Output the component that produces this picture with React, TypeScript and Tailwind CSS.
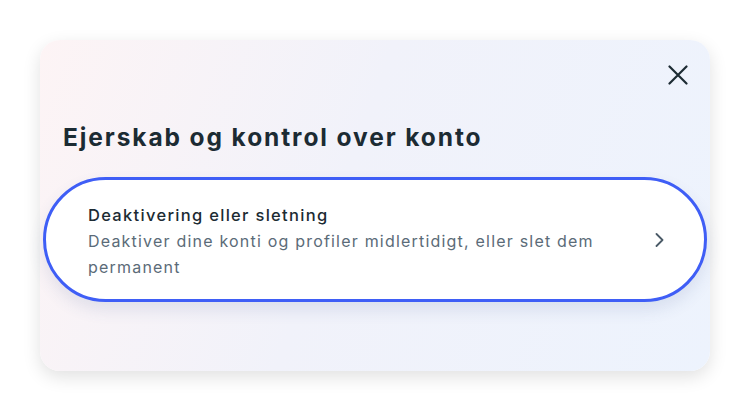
const App = () => {
  return (
    <div className="flex h-[411px] w-[750px] items-start justify-center bg-white pt-[40px] font-['Inter',sans-serif]">
      <div className="flex h-[331px] w-[670px] flex-col rounded-[20px] bg-[linear-gradient(110deg,#fdf4f5_0%,#f1f2fa_45%,#edf3fd_100%)] shadow-[0_6px_18px_rgba(0,0,0,0.12)]">
        {/* close */}
        <div className="flex h-[70px] justify-end pr-[22px] pt-[25px]">
          <svg width="20" height="20" viewBox="0 0 20 20" className="text-[#1c2b33]">
            <path d="M1.5 1.5 L18.5 18.5 M18.5 1.5 L1.5 18.5" stroke="currentColor" strokeWidth="2.2" strokeLinecap="round" fill="none" />
          </svg>
        </div>
        <h1 className="pl-[23px] pt-[12px] text-[24.5px] font-bold leading-[30px] tracking-[1.9px] text-[#1c2b33]">
          Ejerskab og kontrol over konto
        </h1>
        <div className="mx-[3px] mt-[25px] flex h-[125px] items-center rounded-full border-[3px] border-[#3f5ef6] bg-white pl-[42px] pr-[40px] shadow-[0_8px_16px_rgba(60,80,140,0.12)]">
          <div className="flex-1 pt-[2px]">
            <div className="text-[16.5px] font-medium leading-[26px] tracking-[1.3px] text-[#1c2b33]">
              Deaktivering eller sletning
            </div>
            <div className="w-[540px] text-[16px] leading-[26px] tracking-[1.2px] text-[#5b6b78]">
              Deaktiver dine konti og profiler midlertidigt, eller slet dem permanent
            </div>
          </div>
          <svg width="9" height="14" viewBox="0 0 9 14" className="text-[#4a5a67]">
            <path d="M1.5 1 L7.5 7 L1.5 13" stroke="currentColor" strokeWidth="1.8" strokeLinecap="round" strokeLinejoin="round" fill="none" />
          </svg>
        </div>
      </div>
    </div>
  );
};

export default App;
